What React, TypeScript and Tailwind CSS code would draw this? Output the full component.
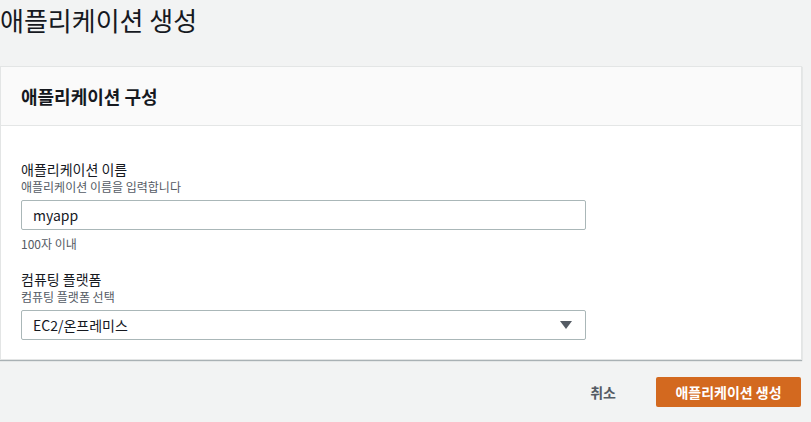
const font = { fontFamily: '"Noto Sans CJK KR", "Noto Sans", sans-serif' }

function Field({ label, hint, children, note }: { label: string; hint: string; children: React.ReactNode; note?: string }) {
  return (
    <div className="flex flex-col">
      <label className="text-[14px] leading-[20px] text-[#16191f]">{label}</label>
      <span className="text-[12px] leading-[16px] text-[#545b64]">{hint}</span>
      <div className="mt-[5px] w-[565px]">{children}</div>
      {note && <span className="mt-[6px] text-[12px] leading-[16px] text-[#545b64]">{note}</span>}
    </div>
  )
}

export default function App() {
  return (
    <div className="w-[811px] h-[422px] bg-[#f2f3f3] overflow-hidden" style={font}>
      <h1 className="text-[26px] leading-[40px] font-normal text-[#16191f]">애플리케이션 생성</h1>

      <div className="mt-[26px] w-[802px] bg-white border border-[#e3e5e5] shadow-[0_1px_1px_0_rgba(0,28,36,0.3)]">
        <div className="h-[59px] bg-[#fafafa] border-b border-[#e4e6e6] flex items-center px-[20px]">
          <h2 className="text-[18px] font-bold text-[#16191f] leading-[24px]">애플리케이션 구성</h2>
        </div>

        <div className="px-[20px] pt-[33px] pb-[19px] flex flex-col gap-[17px]">
          <Field label="애플리케이션 이름" hint="애플리케이션 이름을 입력합니다" note="100자 이내">
            <div className="h-[30px] border border-[#aab7b8] rounded-[2px] bg-white flex items-center px-[11px] text-[14px] text-[#16191f]">
              myapp
            </div>
          </Field>

          <Field label="컴퓨팅 플랫폼" hint="컴퓨팅 플랫폼 선택">
            <div className="h-[30px] border border-[#aab7b8] rounded-[2px] bg-white flex items-center justify-between pl-[11px] pr-[12px] text-[14px] text-[#16191f]">
              <span>EC2/온프레미스</span>
              <svg width="12" height="9" viewBox="0 0 12 9" className="mr-[1px]">
                <path d="M0 0 H12 L6 8 Z" fill="#545b64" />
              </svg>
            </div>
          </Field>
        </div>
      </div>

      <div className="mt-[17px] w-[801px] flex justify-end items-center gap-[20px]">
        <button className="h-[30px] px-[20px] text-[14px] font-bold text-[#545b64]">취소</button>
        <button className="h-[30px] w-[145px] rounded-[2px] bg-[#d3691f] text-white text-[14px] font-bold">
          애플리케이션 생성
        </button>
      </div>
    </div>
  )
}
